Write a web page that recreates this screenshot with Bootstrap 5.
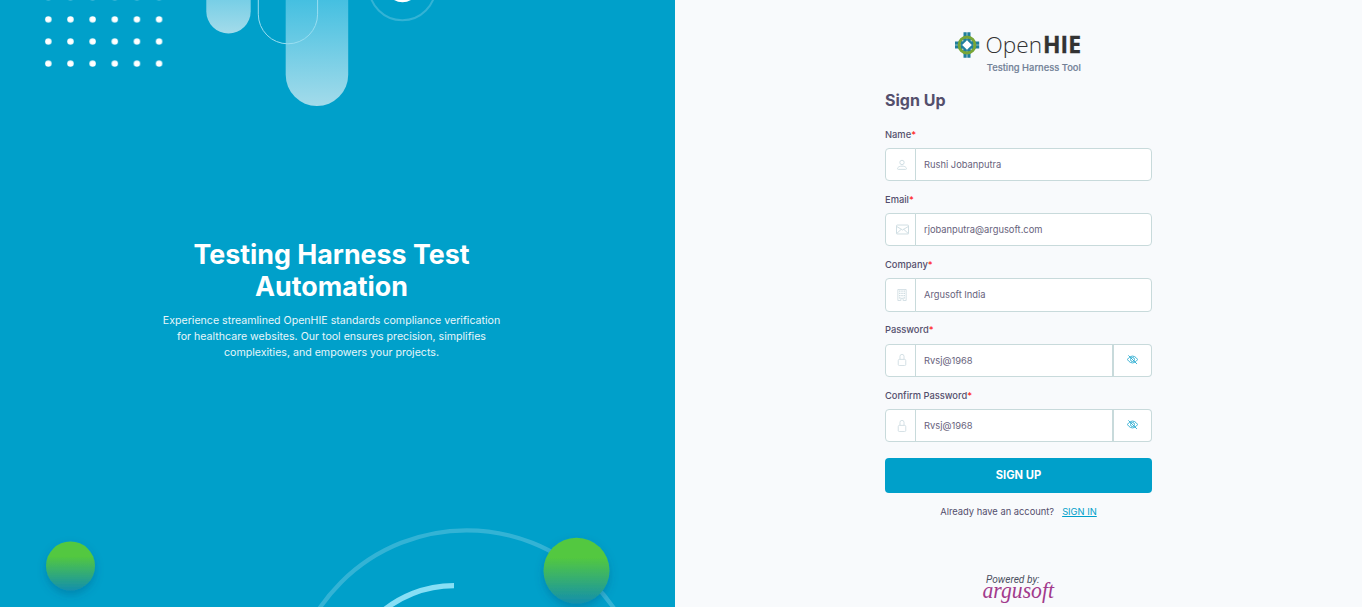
<!DOCTYPE html>
<html lang="en">
<head>
<meta charset="utf-8">
<meta name="viewport" content="width=device-width, initial-scale=1">
<title>OpenHIE Testing Harness Tool - Sign Up</title>
<link href="https://cdn.jsdelivr.net/npm/bootstrap@5.3.0/dist/css/bootstrap.min.css" rel="stylesheet">
<style>
body{font-family:Inter,sans-serif;background:#f8fafc;color:#544f6c;font-size:9.33px;line-height:14px}
.hero-pane{width:675px;background:#00a0ca;padding-right:12px}
.hero-art{inset:0;width:675px;height:607px}
.hero-copy{width:360px;padding-bottom:9px}
.hero-copy h1{font-size:26.8px;line-height:32px;font-weight:700;margin:0 0 11px}
.hero-copy p{font-size:10.62px;line-height:16px;margin:0;color:#e6f6fa}
.form-col{width:267px;padding-top:30px}
.brand-logo{margin-left:69px}
.form-col h2{font-size:16px;line-height:20px;font-weight:700;margin:16px 0 17.7px}
.form-label{font-weight:500;line-height:14px;margin-bottom:6.3px}
.field-block{height:65.25px}
.form-label span{color:#f22}
.input-group>*{border-color:#c8dadb;background:#fff}
.input-group{height:33.2px}
.input-group-text{width:31px;padding:0 0 0 3px;border-radius:4px}
.form-control,.form-control:focus{font-size:9.33px;color:#67627c;padding:.4px 8px 0;border-radius:4px}
.eye-btn{width:40px;padding:0 0 2px;color:#29acd1;border-radius:4px;border-left-width:2px}
.btn-signup{height:35px;background:#00a0ca;color:#fff;font-size:11.2px;font-weight:700;border-radius:4px;border:0;padding:0;margin-top:4px}
.signin-row{margin-top:12px;gap:8px}
.signin-row a{color:#00a0ca}
</style>
</head>
<body>
<svg width="0" height="0" class="position-absolute" aria-hidden="true">
<symbol id="person" viewBox="0 0 16 16"><path fill="none" stroke="currentColor" stroke-width="1.300" d="M10.900 4.600a2.900 2.900 0 1 1-5.800 0 2.900 2.900 0 0 1 5.800 0zM3 13.800h10c.8 0 1-.5 1-1 0-1-1.200-3.300-6-3.300s-6 2.300-6 3.300c0 .5.2 1 1 1z"/></symbol>
<symbol id="mail" viewBox="0 0 16 16"><path fill="none" stroke="currentColor" stroke-width="1.200" d="M1.600 2.500h12.800a1 1 0 0 1 1 1v9a1 1 0 0 1-1 1H1.600a1 1 0 0 1-1-1v-9a1 1 0 0 1 1-1zM.7 4.200 8 8.600l7.300-4.400M.8 13l5.600-5.200M15.200 13 9.600 7.800"/></symbol>
<symbol id="building" viewBox="0 0 16 16"><path fill="none" stroke="currentColor" stroke-width="1.200" d="M2.500.6h11v14.800h-4v-3h-3v3h-4z"/><path fill="currentColor" d="M4 2h2v1.800H4zm3 0h2v1.800H7zm3 0h2v1.800h-2zM4 5h2v1.800H4zm3 0h2v1.800H7zm3 0h2v1.800h-2zM4 8h2v1.800H4zm3 0h2v1.800H7zm3 0h2v1.800h-2zM4 11h2v1.800H4zm6 0h2v1.800h-2z"/></symbol>
<symbol id="lock" viewBox="0 0 16 16"><path fill="none" stroke="currentColor" stroke-width="1.200" d="M5.300 7.200V3.200a2.700 2.700 0 0 1 5.400 0v4M4.500 7.200h7A1.500 1.500 0 0 1 13 8.700v5.200a1.500 1.500 0 0 1-1.500 1.500h-7A1.500 1.500 0 0 1 3 13.900V8.700a1.500 1.500 0 0 1 1.500-1.500z"/></symbol>
<symbol id="eye" viewBox="0 0 16 16"><path fill="none" stroke="currentColor" stroke-width="1.300" d="M.7 8S3.400 3 8 3s7.300 5 7.300 5-2.700 5-7.300 5S.7 8 .7 8zM2 2l12.500 12.500"/><circle cx="8" cy="8" r="2.900" fill="none" stroke="currentColor" stroke-width="1.300"/></symbol>
</svg>
<main class="d-flex vh-100 overflow-hidden">
<section class="hero-pane position-relative flex-shrink-0 d-flex align-items-center justify-content-center text-center text-white">
<svg class="hero-art position-absolute" viewBox="0 0 675 607" aria-hidden="true">
<defs>
<linearGradient id="pillA" gradientUnits="userSpaceOnUse" x1="0" y1="-50" x2="0" y2="33"><stop stop-color="#36bce0"/><stop offset="1" stop-color="#a3dbea"/></linearGradient>
<linearGradient id="pillB" gradientUnits="userSpaceOnUse" x1="0" y1="-10" x2="0" y2="106"><stop stop-color="#3cbde0"/><stop offset="1" stop-color="#a3dbea"/></linearGradient>
<linearGradient id="ball" x1="0" y1="0" x2="0" y2="1"><stop offset=".3" stop-color="#53c83f"/><stop offset="1" stop-color="#138fac"/></linearGradient>
<pattern id="dots" x="37.250" y="8.350" width="22.150" height="22.100" patternUnits="userSpaceOnUse"><circle cx="11.070" cy="11.050" r="3.200" fill="#fff"/></pattern>
<filter id="soft" x="-50%" y="-50%" width="200%" height="200%"><feDropShadow dx="0" dy="4" stdDeviation="4" flood-color="#004a70" flood-opacity=".3"/></filter>
</defs>
<rect x="37" y="0" width="133" height="8.350" fill="url(#dots)" opacity=".4"/>
<rect x="37" y="8.350" width="133" height="66" fill="url(#dots)"/>
<rect x="206.300" y="-60" width="44.400" height="93.500" rx="22.200" fill="url(#pillA)"/>
<rect x="285.700" y="-60" width="62.500" height="166" rx="31.200" fill="url(#pillB)"/>
<rect x="258.300" y="-60" width="59.300" height="103.800" rx="29.600" fill="none" stroke="#99def1"/>
<circle cx="402.300" cy="-13.100" r="33.300" fill="none" stroke="#33b3d5" stroke-width="2"/>
<circle cx="402.500" cy="-14" r="16.300" fill="#fff"/>
<circle cx="466.700" cy="708.200" r="177.900" fill="none" stroke="#33b3d5" stroke-width="4.300"/>
<path d="M341.500 698.100A112.500 112.500 0 0 1 454 585.600" fill="none" stroke="#87dff5" stroke-width="5.300"/>
<circle cx="70.500" cy="566" r="24.500" fill="url(#ball)" filter="url(#soft)"/>
<circle cx="576.500" cy="570.700" r="33" fill="url(#ball)" filter="url(#soft)"/>
</svg>
<div class="hero-copy position-relative">
<h1>Testing Harness Test<br>Automation</h1>
<p>Experience streamlined OpenHIE standards compliance verification<br>for healthcare websites. Our tool ensures precision, simplifies<br>complexities, and empowers your projects.</p>
</div>
</section>
<section class="flex-grow-1 d-flex justify-content-center">
<div class="form-col d-flex flex-column">
<svg class="brand-logo d-block flex-shrink-0" width="130" height="44" viewBox="954 30 130 44">
<path d="M965.100 32.300v25.400M968.900 32.300v25.400M955 43.100h24.200M955 46.900h24.200" stroke="#207f9c" stroke-width="3.200"/>
<circle cx="967" cy="45" r="7.900" fill="none" stroke="#78a637" stroke-width="3"/>
<path d="M965.100 39v4M968.900 39v4M965.100 47v4M968.900 47v4M961 43.100h4M961 46.900h4M969 43.100h4M969 46.900h4" stroke="#207f9c" stroke-width="3.200"/>
<path d="M967 40.200 971.800 45 967 49.800 962.200 45z" fill="#fff"/>
<text x="985.500" y="53" font-family="Open Sans" font-size="21.500" font-weight="300" fill="#333" textLength="56.500" lengthAdjust="spacingAndGlyphs">Open</text>
<text x="1043" y="53" font-family="Open Sans" font-size="22.500" font-weight="700" fill="#333" stroke="#333" stroke-width=".3" textLength="38" lengthAdjust="spacingAndGlyphs">HIE</text>
<text x="986.800" y="70.500" font-family="Inter" font-size="9.200" font-weight="500" fill="#718096" stroke="#718096" stroke-width=".15" textLength="94" lengthAdjust="spacingAndGlyphs">Testing Harness Tool</text>
</svg>
<h2>Sign Up</h2>
<form>
<div class="field-block"><label class="form-label d-block" for="name">Name<span>*</span></label><div class="input-group flex-nowrap"><span class="input-group-text justify-content-center"><svg width="12" height="12" color="#cfdde2"><use href="#person"/></svg></span><input id="name" class="form-control" value="Rushi Jobanputra"></div></div>
<div class="field-block"><label class="form-label d-block" for="email">Email<span>*</span></label><div class="input-group flex-nowrap"><span class="input-group-text justify-content-center"><svg width="13" height="13" color="#cfdde2"><use href="#mail"/></svg></span><input id="email" class="form-control" value="rjobanputra@argusoft.com"></div></div>
<div class="field-block"><label class="form-label d-block" for="company">Company<span>*</span></label><div class="input-group flex-nowrap"><span class="input-group-text justify-content-center"><svg width="12" height="12" color="#cfdde2"><use href="#building"/></svg></span><input id="company" class="form-control" value="Argusoft India"></div></div>
<div class="field-block"><label class="form-label d-block" for="pw">Password<span>*</span></label><div class="input-group flex-nowrap"><span class="input-group-text justify-content-center"><svg width="12" height="12" color="#cfdde2"><use href="#lock"/></svg></span><input id="pw" class="form-control" value="Rvsj@1968"><button type="button" class="btn eye-btn flex-shrink-0 d-flex align-items-center justify-content-center" aria-label="Hide password"><svg width="11" height="11"><use href="#eye"/></svg></button></div></div>
<div class="field-block"><label class="form-label d-block" for="pw2">Confirm Password<span>*</span></label><div class="input-group flex-nowrap"><span class="input-group-text justify-content-center"><svg width="12" height="12" color="#cfdde2"><use href="#lock"/></svg></span><input id="pw2" class="form-control" value="Rvsj@1968"><button type="button" class="btn eye-btn flex-shrink-0 d-flex align-items-center justify-content-center" aria-label="Hide password"><svg width="11" height="11"><use href="#eye"/></svg></button></div></div>
<button type="button" class="btn btn-signup w-100 d-block">SIGN UP</button>
</form>
<div class="signin-row d-flex justify-content-center"><span>Already have an account?</span><a href="#">SIGN IN</a></div>
<svg class="mt-auto mx-auto d-block flex-shrink-0" width="76" height="36" viewBox="981 571 76 36">
<text x="986" y="582.800" font-family="Roboto" font-style="italic" font-size="10.500" fill="#4b5060" textLength="53.500" lengthAdjust="spacingAndGlyphs">Powered by:</text>
<text x="982.500" y="598.300" font-family="Liberation Serif" font-style="italic" font-size="22.500" fill="#a23a8c" textLength="71.500" lengthAdjust="spacingAndGlyphs">argusoft</text>
</svg>
</div>
</section>
</main>
<script src="https://cdn.jsdelivr.net/npm/bootstrap@5.3.0/dist/js/bootstrap.bundle.min.js"></script>
</body>
</html>
